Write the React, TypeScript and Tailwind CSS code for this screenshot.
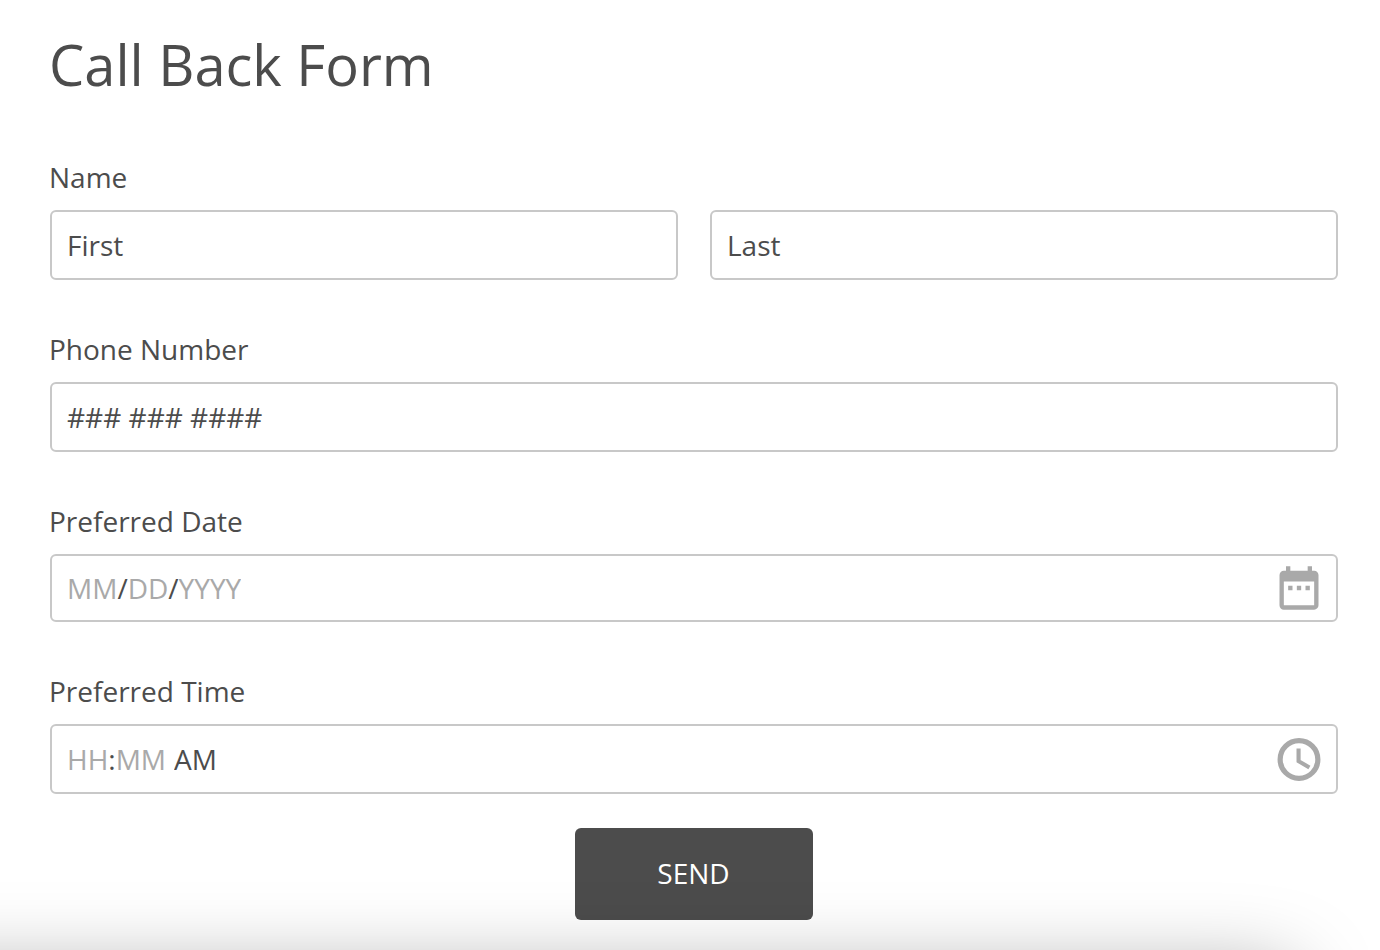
import { useState } from 'react'
import type { ReactNode } from 'react'
import { MdDateRange } from 'react-icons/md'

type SegmentProps = {
  id?: string
  label: string
  placeholder: string
  maxLength: number
}

const boxClass = 'w-full rounded-md border-2 border-[#c8c8c8] bg-white px-[15px] text-[28px]'

function Segment({ id, label, placeholder, maxLength }: SegmentProps) {
  const [value, setValue] = useState('')

  return (
    <input
      id={id}
      aria-label={id ? undefined : label}
      inputMode="numeric"
      maxLength={maxLength}
      placeholder={placeholder}
      value={value}
      onChange={(event) => setValue(event.target.value)}
      className="field-sizing-content outline-none placeholder:text-[#a9a9a9]"
    />
  )
}

function Field({ id, label, children }: { id: string; label: string; children: ReactNode }) {
  return (
    <div>
      <label htmlFor={id} className="block text-[28px] leading-[38px]">
        {label}
      </label>
      <div className="mt-3.5 pl-px">{children}</div>
    </div>
  )
}

function ClockIcon() {
  return (
    <svg viewBox="0 0 24 24" fill="none" stroke="currentColor" className="size-[52px]" aria-hidden="true">
      <circle cx="12" cy="12.2" r="8.7" strokeWidth="2.4" />
      <path d="M11.8 7.2v5.8l5 2.9" strokeWidth="1.9" />
    </svg>
  )
}

export default function App() {
  return (
    <main className="min-h-screen overflow-hidden bg-white pt-[26px] pr-[42px] pb-7 pl-[49px] font-['Open_Sans',sans-serif] text-[#4c4c4c]">
      <h1 className="text-[56px] leading-[76px]">Call Back Form</h1>

      <form className="mt-14" onSubmit={(event) => event.preventDefault()}>
        <div className="flex flex-col gap-[50px]">
          <Field id="first" label="Name">
            <div className="grid grid-cols-2 gap-8">
              <input id="first" placeholder="First" className={`${boxClass} h-[70px] placeholder:text-[#4c4c4c]`} />
              <input
                aria-label="Last name"
                placeholder="Last"
                className={`${boxClass} h-[70px] placeholder:text-[#4c4c4c]`}
              />
            </div>
          </Field>

          <Field id="phone" label="Phone Number">
            <input
              id="phone"
              type="tel"
              placeholder="### ### ####"
              className={`${boxClass} h-[70px] placeholder:text-[#4c4c4c]`}
            />
          </Field>

          <Field id="month" label="Preferred Date">
            <div className={`${boxClass} flex h-[68px] items-center pr-[11px]`}>
              <Segment id="month" label="Month" placeholder="MM" maxLength={2} />
              <span>/</span>
              <Segment label="Day" placeholder="DD" maxLength={2} />
              <span>/</span>
              <Segment label="Year" placeholder="YYYY" maxLength={4} />
              <button type="button" aria-label="Open calendar" className="ml-auto text-[#a9a9a9]">
                <MdDateRange className="size-[52px]" />
              </button>
            </div>
          </Field>

          <Field id="hour" label="Preferred Time">
            <div className={`${boxClass} flex h-[70px] items-center pr-[11px]`}>
              <Segment id="hour" label="Hour" placeholder="HH" maxLength={2} />
              <span>:</span>
              <Segment label="Minute" placeholder="MM" maxLength={2} />
              <select aria-label="AM or PM" className="ml-2 appearance-none outline-none">
                <option>AM</option>
                <option>PM</option>
              </select>
              <button type="button" aria-label="Open clock" className="ml-auto text-[#a9a9a9]">
                <ClockIcon />
              </button>
            </div>
          </Field>
        </div>

        <button type="submit" className="mx-auto mt-[34px] block h-[92px] w-[238px] rounded-md bg-[#4c4c4c] pb-0.5 text-[28px] text-white">
          SEND
        </button>
      </form>

      {/* soft shade rising from below the window */}
      <div className="pointer-events-none fixed top-full right-[84px] -left-40 h-60 rounded-3xl shadow-[0_20px_80px_rgba(0,0,0,0.34)]" />
    </main>
  )
}
